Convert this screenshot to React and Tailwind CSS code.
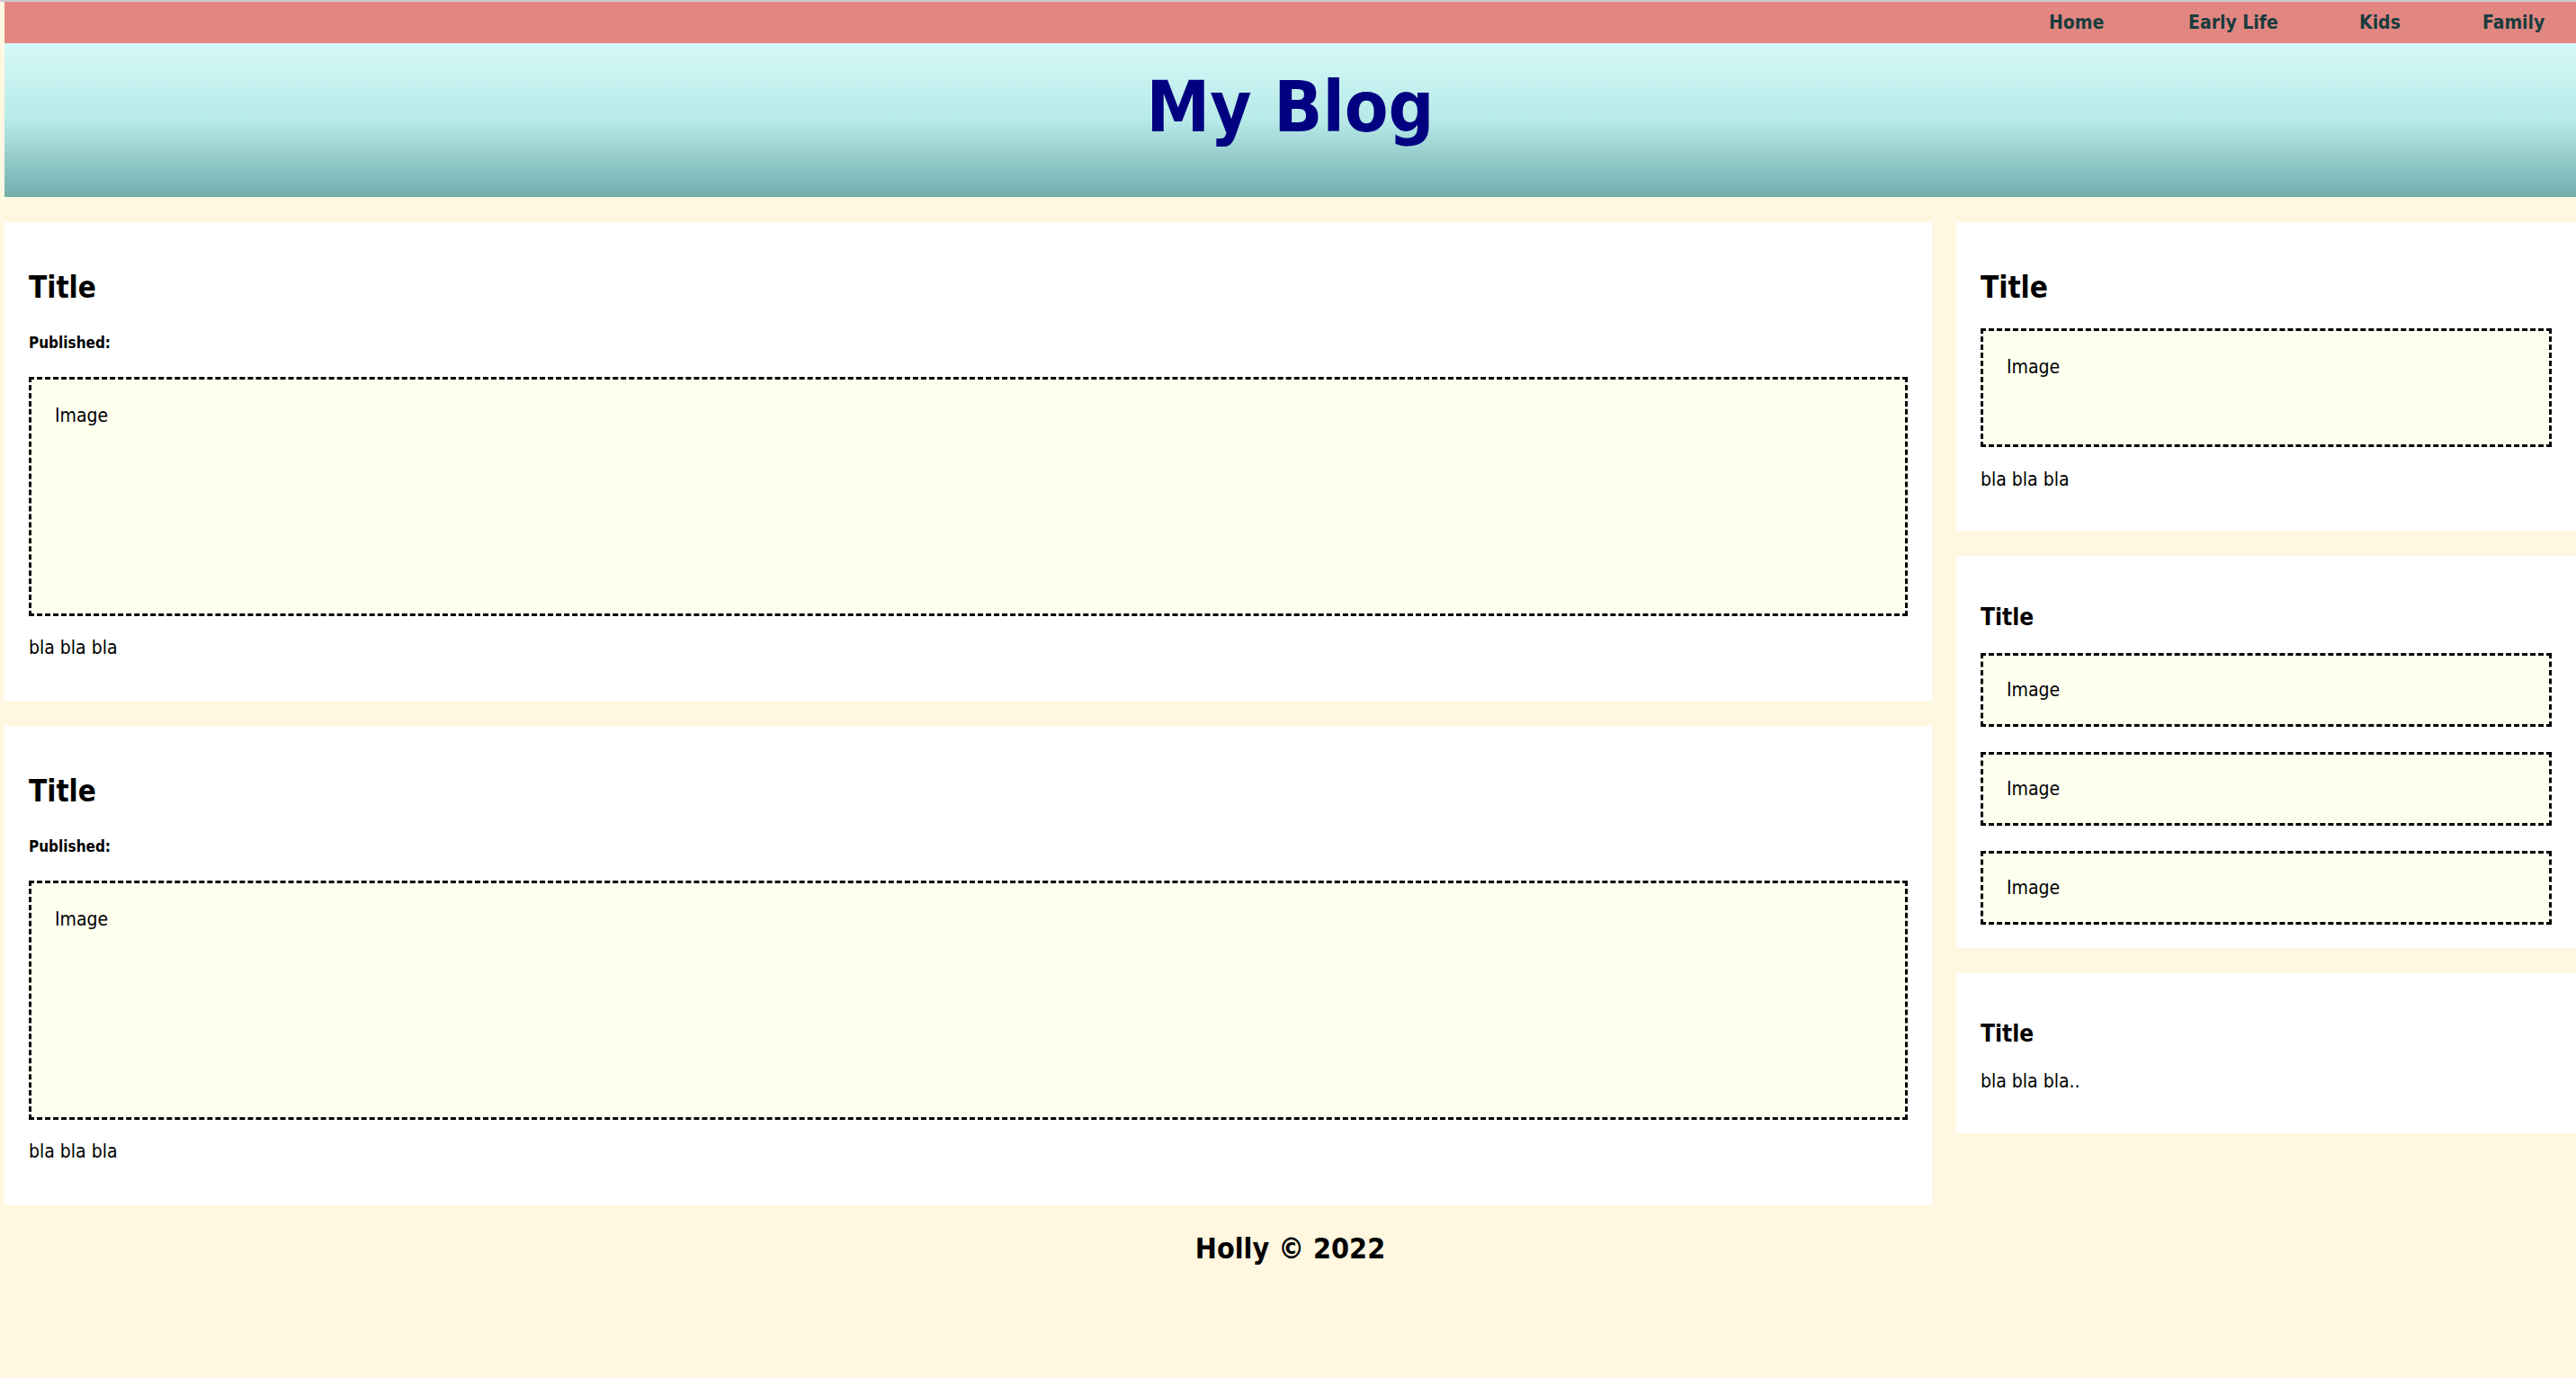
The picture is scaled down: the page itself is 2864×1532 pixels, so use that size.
import React from 'react';

const navLinks = [
  { label: 'Home', width: 'w-[155px]' },
  { label: 'Early Life', width: 'w-[190px]' },
  { label: 'Kids', width: 'w-[137px]' },
  { label: 'Family', width: 'w-[71px]' },
];

function ImageBox({ height, pad }) {
  return (
    <div className={`${height} ${pad} border-[3px] border-dashed border-black bg-[#fffff0] px-[26px]`}>
      <p className="text-[21px] leading-[25px]">Image</p>
    </div>
  );
}

function Post() {
  return (
    <div className="bg-white px-[27px] pt-[53px] pb-[47px]">
      <h2 className="text-[33px] leading-[40px] font-bold">Title</h2>
      <h5 className="mt-[31px] text-[17px] leading-[20px] font-bold">Published:</h5>
      <div className="mt-[28px]">
        <ImageBox height="h-[266px]" pad="pt-[28px]" />
      </div>
      <p className="mt-[23px] text-[21px] leading-[25px]">bla bla bla</p>
    </div>
  );
}

export default function App() {
  return (
    <div className="min-h-[1532px] bg-[#fff7e0] text-black font-['DejaVu_Sans_Condensed','DejaVu_Sans',sans-serif]">
      {/* browser edge */}
      <div className="h-[2px] bg-[#cccccc]" />

      <div className="pl-[5px]">
        {/* Top nav */}
        <nav className="flex h-[46px] items-center justify-end bg-[#e28682] pr-[33px]">
          {navLinks.map((l) => (
            <a key={l.label} href="#" className={`${l.width} shrink-0 text-[21px] leading-[25px] font-bold text-[#183c3c]`}>
              {l.label}
            </a>
          ))}
        </nav>

        {/* Header */}
        <header className="h-[171px] bg-gradient-to-b from-[#d5f9f8] via-[#b7eae8] to-[#72aeae] pt-[31px] text-center">
          <h1 className="text-[79px] leading-[81px] font-bold text-[#000080]">My Blog</h1>
        </header>

        {/* Content */}
        <div className="mt-[28px] flex items-start">
          <div className="flex w-[2143px] shrink-0 flex-col gap-[27px]">
            <Post />
            <Post />
          </div>

          <div className="ml-[27px] flex flex-1 flex-col gap-[28px]">
            <div className="bg-white px-[27px] pt-[53px] pb-[44px]">
              <h2 className="text-[33px] leading-[40px] font-bold">Title</h2>
              <div className="mt-[25px]">
                <ImageBox height="h-[132px]" pad="pt-[28px]" />
              </div>
              <p className="mt-[24px] text-[21px] leading-[25px]">bla bla bla</p>
            </div>

            <div className="bg-white px-[27px] pt-[53px] pb-[26px]">
              <h3 className="text-[26px] leading-[31px] font-bold">Title</h3>
              <div className="mt-[24px] flex flex-col gap-[28px]">
                <ImageBox height="h-[82px]" pad="pt-[26px]" />
                <ImageBox height="h-[82px]" pad="pt-[26px]" />
                <ImageBox height="h-[82px]" pad="pt-[26px]" />
              </div>
            </div>

            <div className="bg-white px-[27px] pt-[52px] pb-[45px]">
              <h3 className="text-[26px] leading-[31px] font-bold">Title</h3>
              <p className="mt-[25px] text-[21px] leading-[25px]">bla bla bla..</p>
            </div>
          </div>
        </div>

        {/* Footer */}
        <footer className="mt-[29px] text-center">
          <h2 className="text-[32px] leading-[38px] font-bold">Holly © 2022</h2>
        </footer>
      </div>
    </div>
  );
}
